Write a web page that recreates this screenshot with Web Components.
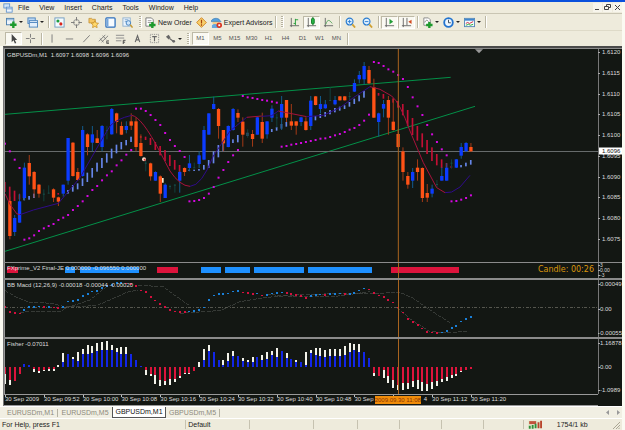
<!DOCTYPE html>
<html lang="en">
<head>
<meta charset="utf-8">
<title>GBPUSDm,M1</title>
<style>
html,body{margin:0;height:100%}
body{background:#fbfaf2;font:7px/9px "Liberation Sans",Arial,sans-serif;color:#222}
</style>
</head>
<body>
<trade-app></trade-app>
<script>
const ICONS={
app:'<rect x="1" y="1" width="7" height="5" fill="#cfe4fa" stroke="#5b8fcb"/><rect x="4" y="5" width="7" height="6" fill="#eef6ff" stroke="#5b8fcb"/><path d="M4 7h7" stroke="#5b8fcb"/>',
newchart:'<rect x=".5" y="1.500" width="8" height="7" fill="#eef4fb" stroke="#4c7fae"/><path d="M1 3h7" stroke="#7aa9d4"/><path d="M8 5v7M4.500 8.500h7" stroke="#1d9a2c" stroke-width="2.600"/>',
profiles:'<rect x="1" y="1" width="8" height="6" fill="#bcd7f3" stroke="#4b83bd"/><rect x="2.500" y="4" width="9" height="7" fill="#e3effb" stroke="#4b83bd"/><path d="M3 6h8" stroke="#4b83bd"/>',
market:'<rect x="1" y="1" width="10" height="10" fill="#f4fbff" stroke="#6f9bc0"/><circle cx="4.300" cy="4.300" r="1.700" fill="#1e9c3e"/><circle cx="7.500" cy="7.500" r="1.700" fill="#d8261c"/>',
cross4:'<circle cx="6" cy="6" r="3.200" fill="none" stroke="#888"/><path d="M6 0v4M6 8v4M0 6h4M8 6h4" stroke="#777"/>',
folder:'<path d="M1 1.500h3l1 1h3v4H1z" fill="#f5c663" stroke="#b98527" stroke-width=".7"/><path d="M7.500 4l1.300 2.500 2.700.4-2 1.900.5 2.800-2.500-1.300L5 11.600l.5-2.800-2-1.900 2.700-.4z" fill="#ffd86b" stroke="#c58a1f" stroke-width=".8"/>',
terminal:'<rect x="1" y="1" width="10" height="10" rx="1" fill="#f7fbff" stroke="#2e70bd" stroke-width="1.400"/><path d="M3 2v8" stroke="#6aa0da" stroke-width="1.500"/>',
tester:'<rect x="1" y="1" width="8" height="9" fill="#eef5fc" stroke="#8fb0cf"/><path d="M3 3h4M3 5h3" stroke="#7da6cf"/><circle cx="7" cy="6.500" r="2.500" fill="#cfe6fb" stroke="#3f7fbe"/><path d="M9 8.500l2.500 3" stroke="#c79a34" stroke-width="1.600"/>',
order:'<path d="M1 1h6l2 2v7H1z" fill="#fff" stroke="#777"/><path d="M3 4h4M3 6h4" stroke="#999"/><path d="M8 5.500V12M4.500 8.700h7" stroke="#1d9a2c" stroke-width="2.600"/>',
warn:'<path d="M6 .7L11.300 6 6 11.300.7 6z" fill="#f8cf6b" stroke="#cf8422"/><path d="M6 3v4M6 8v1.500" stroke="#a5420b" stroke-width="1.300"/>',
expert:'<circle cx="5" cy="5.500" r="3.500" fill="#f4d08b"/><path d="M0 5c1-4 8-5 10-1l1 1z" fill="#56a0dd" stroke="#2d72ae" stroke-width=".6"/><path d="M1 9c2-2 6-2 8 1v2H1z" fill="#66a8df"/><circle cx="9" cy="9" r="3" fill="#d93420"/><rect x="8" y="8" width="2" height="2" fill="#fff"/>',
bars:'<path d="M2.500 1v10M1 9.500h10" stroke="#666"/><path d="M7 2v7M7 3h3M5 7h2" stroke="#209a35"/>',
candle:'<path d="M2.500 1v10M1 9.500h10" stroke="#666"/><path d="M7.500 0v9" stroke="#147a26"/><rect x="6" y="1.500" width="3" height="6" rx="1" fill="#27b443" stroke="#147a26"/>',
line:'<path d="M2.500 1v10M1 9.500h10" stroke="#666"/><path d="M3 8c2-6 4-5 7-1" fill="none" stroke="#4aa152"/>',
zoomin:'<circle cx="5" cy="5" r="3.700" fill="#dff0ff" stroke="#2b7cd0" stroke-width="1.300"/><path d="M5 3v4M3 5h4" stroke="#2b7cd0"/><path d="M8 8l3 3.500" stroke="#cfa030" stroke-width="1.900"/>',
zoomout:'<circle cx="5" cy="5" r="3.700" fill="#dff0ff" stroke="#2b7cd0" stroke-width="1.300"/><path d="M3 5h4" stroke="#2b7cd0"/><path d="M8 8l3 3.500" stroke="#cfa030" stroke-width="1.900"/>',
scroll:'<path d="M2.500 1v10M1 9.500h10" stroke="#666"/><path d="M6 2l4 3.200L6 8z" fill="#239d37"/>',
shift:'<path d="M2.500 1v10M1 9.500h10M6.500 1v8" stroke="#666"/><path d="M11.500 3L8 5.300l3.500 2.300z" fill="#d34a1e"/>',
indic:'<path d="M2 1h5l2 2v6H2z" fill="#fff" stroke="#888"/><path d="M3 6c1-3 3-3 4-1" fill="none" stroke="#777"/><path d="M8 5.500V12M4.500 8.700h7" stroke="#1d9a2c" stroke-width="2.600"/>',
clock:'<circle cx="6" cy="6" r="4.700" fill="#eef7ff" stroke="#2374cf" stroke-width="2"/><path d="M6 3v3.300h2.500" fill="none" stroke="#345"/>',
templ:'<rect x=".5" y="1.500" width="11" height="9" fill="#f5faff" stroke="#5588b8"/><path d="M1 3h10" stroke="#3e86cf" stroke-width="2"/><path d="M2 7l2-1 2 1 4-2" fill="none" stroke="#c23"/><path d="M2 9l3-1 2 1 3-1" fill="none" stroke="#2a3"/>',
cursor:'<path d="M4 1v9l2-2 1.500 3.500 1.500-.7L7.500 7.500H10z" fill="#444"/>',
cross:'<path d="M6 1v4M6 7v4M1 6h4M7 6h4" stroke="#777"/>',
vline:'<path d="M5.500 1.500v9" stroke="#777"/>',
hline:'<path d="M2 6.500h8" stroke="#777"/>',
trend:'<path d="M2.500 10L9.500 2.500" stroke="#777"/>',
channel:'<path d="M1 9l7-7M4 10l7-7M2 6l4 4M5 3l4 4" stroke="#777" fill="none"/><path d="M12 8.500H9.500v3H12M9.500 10H12" stroke="#444" fill="none" stroke-width=".8"/>',
fib:'<path d="M1 2.500h9M1 5.500h9M1 8.500h6" stroke="#888"/><path d="M11.500 8H9v4M9 10h2" stroke="#444" fill="none"/>',
textA:'<path d="M3.500 10L6 3l2.500 7M4.500 7.500h3" stroke="#666" fill="none" stroke-width="1.200"/>',
label:'<rect x="1.500" y="1.500" width="9" height="9" fill="none" stroke="#888" stroke-dasharray="1 1"/><path d="M3.500 4h5M6 4v5" stroke="#666" stroke-width="1.200"/>',
arrows:'<path d="M1 4l3-2 2 3-2 2z" fill="#666"/><path d="M5 6l4 3" stroke="#666" stroke-width="1.300"/><circle cx="9.500" cy="9" r="1.500" fill="#666"/>',
signal:'<path d="M0 1h12v10H0z" fill="#e3e9cf"/><path d="M1 3.500h6" stroke="#c2533c" stroke-width="4"/><path d="M1.500 7.500v4M4 6.500v5M6.500 5v6" stroke="#2f8f3a" stroke-width="1.600"/><path d="M9 3v8M11.200 1v10" stroke="#b9442c" stroke-width="1.600"/>'
};
const icon=n=>`<svg viewBox="0 0 12 12" aria-hidden="true">${ICONS[n]}</svg>`;
const def=(tag,html)=>customElements.define(tag,class extends HTMLElement{
  connectedCallback(){
    if(this.shadowRoot)return;
    const t=document.createElement('template');
    t.innerHTML=typeof html==='function'?html(this):html;
    this.attachShadow({mode:'open'}).append(t.content.cloneNode(true));
  }
});

def('tool-button',el=>`<style>
:host{display:block;flex:none}
button{all:unset;box-sizing:border-box;display:flex;align-items:center;justify-content:center;gap:2px;min-width:17px;height:13px;white-space:nowrap;border:1px solid transparent;color:#222}
:host([drop]) button{min-width:21px}
:host([pressed]) button{background:#faf9f2;border-color:#bdb9a6 #fff #fff #bdb9a6}
:host([text]) button{color:#555;font-size:6px}
svg{width:11px;height:11px;flex:none;display:block}
i{border:2px solid transparent;border-top-color:#222;border-bottom:0}
</style><button type="button" aria-label="${el.getAttribute('label')}" aria-pressed="${el.hasAttribute('pressed')}">${el.hasAttribute('icon')?icon(el.getAttribute('icon')):''}<slot></slot>${el.hasAttribute('drop')?'<i></i>':''}</button>`);

def('tool-sep',`<style>:host{display:block;flex:none;width:1px;height:12px;margin:0 2px;background:#bbb7a4;box-shadow:1px 0 #fff}
:host([grip]){width:2px;margin:0 3px;background:repeating-linear-gradient(#b6b2a0 0 1px,#f7f5ea 1px 2px)}</style>`);

def('tool-row',`<style>:host{display:flex;align-items:center;box-sizing:border-box;background:#eeebdc;overflow:hidden}</style><slot></slot>`);

def('menu-bar',`<style>
:host{display:flex;align-items:center;background:#eeebdc;box-sizing:border-box;border-bottom:1px solid #c9c5b3;padding-left:3px;height:12px}
svg{width:10px;height:10px}
nav{display:flex;flex:1}
button{all:unset;padding:0 5px;color:#222}
.w{display:flex;gap:1px}
.w button{padding:0;width:9px;height:9px;background:#f7f5ec}
.w svg{width:7px;height:7px;margin:1px;display:block}
</style>${icon('app')}<nav>${['File','View','Insert','Charts','Tools','Window','Help'].map(s=>`<button type="button">${s}</button>`).join('')}</nav>
<div class="w"><button type="button" aria-label="Minimize"><svg viewBox="0 0 7 7"><path d="M1 5.500h4" stroke="#444"/></svg></button><button type="button" aria-label="Restore"><svg viewBox="0 0 7 7" fill="none" stroke="#444"><path d="M2.500 2V.5h4v3H5M.5 2.500h4v3h-4z"/></svg></button><button type="button" aria-label="Close"><svg viewBox="0 0 7 7"><path d="M1 1l5 5M6 1L1 6" stroke="#444"/></svg></button></div>`);

/* Plot data. Bar n is centred on x = 15 + 14.56 n; y values share one scale per window. */
const X=n=>15+14.56*n;
const CANDLES=`o,452,465,570,580 b,507,516,558,570 b,443,466,530,530 b,350,365,456,462 o,327,351,391,416 o,375,378,430,455 o,414,416,443,455 w,430,443,445,466 w,418,440,442,442 o,427,430,455,468 o,452,454,467,480 b,416,416,443,452 b,276,276,404,416 o,288,290,390,392 o,366,378,402,404 b,240,252,390,392 o,262,265,303,328 b,240,265,290,316 o,252,277,291,291 b,237,240,303,316 w,240,252,254,280 b,186,189,265,266 o,200,202,228,262 o,227,240,266,267 b,226,240,252,262 o,202,226,239,252 o,215,226,303,316 o,265,291,330,332 w,345,350,352,376 o,350,352,391,404 b,376,378,404,404 o,388,391,443,468 b,412,416,456,456 w,416,420,422,430 w,414,416,418,440 b,375,378,404,440 o,364,366,378,390 b,327,352,366,376 w,350,364,366,366 b,316,328,354,366 b,240,252,341,342 b,202,202,266,266 b,152,174,189,190 o,186,189,240,278 o,252,252,292,316 b,238,240,303,304 b,186,189,252,254 o,190,201,215,228 o,214,227,266,302 w,250,264,266,275 o,252,264,279,302 b,212,214,266,266 o,200,228,278,291 b,226,226,265,278 b,178,188,215,228 w,203,214,216,245 b,150,174,215,252 o,162,162,215,228 o,174,226,239,252 o,226,226,239,266 b,212,214,228,240 o,214,226,252,254 b,150,164,240,252 o,150,151,177,178 b,150,174,189,202 b,162,175,187,188 w,124,162,164,165 b,150,162,175,178 o,150,151,163,164 o,150,151,163,164 w,138,150,152,165 b,100,111,137,138 b,75,87,100,112 b,48,60,100,116 o,60,72,112,114 o,98,124,215,216 b,200,202,228,272 b,162,174,188,214 o,150,162,215,266 o,160,227,252,254 o,250,264,303,305 o,304,316,378,404 o,378,390,416,428 b,366,378,404,426 o,340,365,378,404 o,364,366,456,468 o,414,441,455,468 b,416,428,443,454 w,402,414,416,425 b,364,390,404,404 b,352,365,404,404 w,340,350,352,368 b,339,340,365,366 b,291,303,329,338 b,288,291,316,318 o,291,303,316,318`.split(' ').map(s=>s.split(','));
const RIB_R='0,408,438 1,422,465 2,434,465 3,445,460 11,441,446 28,270,276 29,272,282 30,276,297 31,288,312 32,300,328 33,312,345 34,327,360 35,342,371 36,357,385 77,141,149 78,144,158 80,157,170 81,165,185 82,174,208 83,192,240 84,216,267 85,240,284 86,262,304 87,282,324 88,304,345 89,324,358 90,340,366 91,351,364 92,360,366';
const RIB_B='4,452,463 5,450,461 6,443,456 13,432,443 14,417,437 15,412,430 16,397,420 17,380,408 18,366,395 19,350,377 20,336,366 21,322,350 22,308,337 23,296,322 24,288,310 25,282,298 26,272,288 38,371,375 39,371,375 40,369,374 41,357,371 42,342,366 43,316,352 44,297,334 45,290,316 47,280,291 48,267,289 50,260,270 55,249,258 56,243,254 57,234,248 58,228,242 63,216,228 64,210,223 65,204,216 66,198,212 67,192,205 68,186,199 69,182,194 70,178,189 71,168,182 72,158,174 73,148,166 74,135,155 94,357,364 95,350,361 96,342,356';
const SAR=[293,316,341,366,581,577,568,555,547,540,534,522,515,507,492,480,466,450,432,420,403,388,376,358,343,326,312,188,188,195,207,222,237,261,282,300,315,333,466,465,462,456,443,423,395,372,348,328,312,150,154,156,159,162,164,167,170,302,300,296,294,291,288,285,282,278,277,273,268,264,258,251,246,237,224,206,48,51,60,70,77,87,99,123,154,181,207,237,265,288,310,328,466,465,461,456,448];
const MACD=[142,157,160,161,150,141,141,140,142,142,143,145,142,125,124,121,108,102,95,93,85,78,75,70,70,71,72,78,92,96,111,122,133,142,151,155,156,157,155,153,151,143,121,107,103,103,101,95,93,98,99,103,101,107,105,101,100,98,99,103,106,108,114,109,106,104,105,103,102,101,103,102,99,92,86,89,100,107,112,120,128,143,158,177,187,195,206,216,218,219,218,214,205,198,185,177,172];
const FISHER=`342,372 360,375 362 341 313 314 327,336 333,340 330,334 327,332 328,332 320,314 307,279 282 298,291 304,277 283,268 283,256 279,259 272,248 270,246 270,244 270,255 277,263 283,261 283,260 283 300 317 330,346 342,348 345,372 360,378 362,376 358,374 356,367 347,354 340,343 338,341 333 322,305 300,267 272,255 277 300 315,300 303,280 288,274 287 303,294 305,300 307,290 291 300,285 296,276 285,273 291,264 274 293,280 297 307,300 305 315,276 280,270 284,265 287,264 290,270 287,266 287,267 287,267 284,258 275,250 270,252 275,253 275 294 340,347 347 330,353 348,370 361,384 375,390 370,391 370,388 364,382 360,387 367,392 373,392 367,386 362,378 357,366 350,363 345,355 342,347 334,337 330 326`.split(' ').map(s=>s.split(',').map(Number));
const R=(x,y,w,h,f)=>`<rect x="${x.toFixed(1)}" y="${y}" width="${w}" height="${h}" fill="${f}"/>`;
const P=(d,c,w=3,e='')=>`<path d="${d}" fill="none" stroke="${c}" stroke-width="${w}" ${e}/>`;
const cursorLine=P('M1195 0V660','#a9641f');
const ribbon=(s,c)=>s.split(' ').map(r=>{const[n,a,b]=r.split(',').map(Number);return R(X(n)-3,a,5,b-a,c)}).join('');
const PLOTS={
price:()=>{
  let s=P('M15 205L1352 94M15 616L1425 181','#039048')+P('M15 316.500H1794','#666b6b');
  s+=ribbon(RIB_R,'#c30f35')+ribbon(RIB_B,'#6686e8');
  CANDLES.forEach(([c,h,t,b,l],k)=>{
    const x=X(k+1),[wick,body]={o:['#a33a16','#ff5216'],b:['#125a8c','#0c3cff'],w:['#123f3c','#17504a']}[c];
    s+=R(x-1.5,+h,3,Math.max(3,l-h),wick)+R(x-(c=='w'?3:5),+t,c=='w'?6:10,Math.max(3,b-t),body);
  });
  s+=P('M15 443L30 475 50 503 60 506M395 208Q425 212 480 318L510 375Q540 420 570 421M740 214L785 210M835 195L920 212M1110 122L1140 130 1175 150Q1200 170 1230 255L1270 350 1310 425 1335 440','#a8123c');
  s+=P('M60 506L100 492 175 472 240 395 300 290 330 240Q350 218 395 208M570 421Q605 420 640 330L690 255 740 214M785 211L815 209 835 195M920 212L970 208 1020 185 1060 155 1110 122M1335 440L1355 438 1380 423 1410 388','#2f0b8a');
  SAR.forEach((y,n)=>s+=R(X(n)-3,y-3,6,6,'#d408e0'));
  return s+'<circle cx="432" cy="340" r="6" fill="#f6d8c8"/><circle cx="434" cy="341" r="3" fill="#d33"/><path d="M486 396h5v14h-5z" fill="#f6e8cc"/><path d="M1425 10h24l-12 12z" fill="#999"/>';
},
trend:()=>[[20,55,1],[195,226],[240,417],[472,534,1],[603,663],[675,751],[763,911],[923,1116],[1172,1378,1]].map(([a,b,r])=>R(a,21,b-a,18,r?'#dc143c':'#1e90ff')).join(''),
macd:()=>{
  let s=P('M15 142H1794','#77776c',2,'stroke-dasharray="9 5 3 5"');
  s+=P('M15 92L50 112 90 127 160 130 190 141 290 137 340 115 380 97 415 90M60 158L100 153 180 155 200 143 270 120 320 80M415 76L490 80 530 110 570 138M540 160L640 153 665 150 720 125 800 112 900 104 1050 100 1130 100 1200 97 1240 115 1290 150 1350 188M800 103L900 111 1000 110 1110 95M1190 143L1235 180 1290 215 1340 218 1400 214','#484c48',2,'stroke-dasharray="12 4"');
  MACD.forEach((y,n)=>s+=R(X(n)-3,y-3,6,5,n&&y<=MACD[n-1]?'#1a80d8':'#d4103e'));
  return s;
},
fisher:()=>FISHER.map(([c,e],n)=>{
  const up=(e??c)<321,x=X(n)-3;
  return (up?R(x,c,6,321-c,'#1226e8'):R(x,321,6,c-321,'#dc143c'))+(e?R(x,Math.min(c,e),6,Math.abs(c-e),'#f2f2ea'):'');
}).join('')
};

def('chart-window',el=>`<style>
:host{display:grid;grid-template-columns:minmax(0,1fr) 24px;min-height:0;box-sizing:border-box;border-top:var(--rule,2px) solid #8b8b8b;color:#dcdcdc;font-size:6px;line-height:7px}
.plot{position:relative;min-height:0;border-left:1px solid #999;border-right:1px solid #777;margin-right:-1px}
svg{position:absolute;inset:0;width:100%;height:100%;display:block}
.t{position:absolute;left:2px;top:var(--title,2px);white-space:nowrap}
.note{position:absolute;right:4px;top:2px;font:8px/9px "DejaVu Sans",sans-serif;color:#dc960c}
.axis{position:relative;display:flex;flex-direction:column;justify-content:space-between;padding:var(--pad,0);white-space:nowrap;font-size:var(--size,6px);line-height:var(--line,7px)}
.axis span{display:flex;align-items:center;gap:var(--gap,0)}
.axis span::before{content:"";width:2px;height:1px;background:#aaa}
.axis ::slotted(*){position:absolute;left:1px;right:0;top:48%;transform:translateY(-50%);font-weight:400;background:#fff;color:#111;padding-left:3px;line-height:7px}
</style><div class="plot"><svg viewBox="${el.getAttribute('box')}" preserveAspectRatio="none" shape-rendering="${el.id=='price'?'auto':'crispEdges'}" aria-hidden="true">${PLOTS[el.id]()}${cursorLine}</svg><div class="t">${el.getAttribute('heading')}</div>${el.hasAttribute('note')?`<div class="note">${el.getAttribute('note')}</div>`:''}</div>
<div class="axis">${el.getAttribute('scale').split(' ').map(s=>`<span>${s}</span>`).join('')}<slot></slot></div>`);

def('time-axis',`<style>
:host{display:block;position:relative;border-top:1px solid #999;border-bottom:1px solid #999;box-sizing:border-box;color:#dcdcdc;font-size:6px;line-height:9px;margin-right:24px}
ol{display:flex;list-style:none;margin:0;padding:0 0 0 1px}
li{flex:0 0 6.55%;white-space:nowrap;width:0;position:relative;box-sizing:border-box}
li.r{text-align:right;padding-right:5px}
li::before{content:"";position:absolute;left:0;top:0;width:1px;height:2px;background:#bbb}
mark{position:absolute;left:62.4%;top:1px;line-height:8px;background:#f08c0a;color:#8a3606;white-space:nowrap}
</style><ol>${['2009','09:52','10:00','10:08','10:16','10:24','10:32','10:40','10:48',''].map(t=>`<li>30 Sep ${t}</li>`).join('')}<li class="r">4</li><li>30 Sep 11:12</li><li>30 Sep 11:20</li></ol><mark>2009.09.30 11:08</mark>`);

def('chart-tabs',`<style>
:host{display:flex;align-items:center;background:#f1efe3;height:12px;padding-left:4px;box-sizing:border-box;border-top:1px solid #fff}
button{all:unset;box-sizing:border-box;width:54px;text-align:center;color:#8d8a7d;border-right:1px solid #b5b2a2;line-height:8px}
button[aria-selected=true]{background:#fff;color:#111;border:1px solid #555;border-top:0;line-height:10px}
button.n{border:0}
.s{flex:1}
svg{width:16px;height:7px;margin-right:1px}
</style><button role="tab">EURUSDm,M1</button><button role="tab" class="n">EURUSDm,M5</button><button role="tab" aria-selected="true">GBPUSDm,M1</button><button role="tab">GBPUSDm,M5</button><span class="s"></span><svg viewBox="0 0 16 7"><path d="M4 1v5L1 3.500zM12 1v5l3-2.500z" fill="#999"/></svg>`);

def('status-bar',`<style>
:host{display:grid;grid-template-columns:186fr 64fr 63fr 44fr 42fr 42fr 42fr 40fr 88fr 10fr;align-items:center;background:#eeebdc;border-top:1px solid #fff;height:12px;box-sizing:border-box}
div{padding-left:2px;border-right:1px solid #c6c2b0;height:9px;line-height:9px;white-space:nowrap;display:flex;gap:15px}
div.e{border:0;padding-left:4px}
svg{width:14px;height:9px;flex:none}
div.e:last-child{padding:0}
div.e:last-child svg{width:8px}
</style><div>For Help, press F1</div><div>Default</div><div></div><div></div><div></div><div></div><div></div><div></div><div class="e"><svg viewBox="0 0 12 12" preserveAspectRatio="none">${ICONS.signal}</svg>1754/1 kb</div><div class="e"><svg viewBox="0 0 8 9"><path d="M1 9l7-7M4 9l4-4M6.500 9L8 7.500" stroke="#aaa694"/></svg></div>`);

def('trade-app',`<style>
:host{display:flex;flex-direction:column;min-height:100vh;box-sizing:border-box;border-top:2px solid #0a50dc;padding-right:3px}
.one{height:17px;padding-left:4px;border-bottom:1px solid #dedac8}
.two{height:15px;padding-left:5px}
main{flex:1;display:grid;grid-template-rows:214fr 16fr 59fr 57fr 12px;background:#131713;margin-left:3px;border-left:1px solid #777;border-top:2px solid #4a4a4a;min-height:0}
#price{--rule:1px;--pad:0 0 19px;--title:3px;--gap:2px}
#trend{--rule:1px;--size:5px;--line:5px}
#macd,#fisher{--pad:1px 0 0}
</style>
<menu-bar></menu-bar>
<tool-row class="one"><tool-button icon="newchart" label="New chart" drop></tool-button><tool-button icon="profiles" label="Profiles" drop></tool-button><tool-sep></tool-sep><tool-button icon="market" label="Market watch"></tool-button><tool-button icon="cross4" label="Data window"></tool-button><tool-button icon="folder" label="Navigator"></tool-button><tool-button icon="terminal" label="Terminal"></tool-button><tool-button icon="tester" label="Strategy tester"></tool-button><tool-sep grip></tool-sep><tool-button icon="order" label="New Order">New Order</tool-button><tool-button icon="warn" label="MetaEditor"></tool-button><tool-button icon="expert" label="Expert Advisors">Expert Advisors</tool-button><tool-sep></tool-sep><tool-sep grip></tool-sep><tool-button icon="bars" label="Bar chart"></tool-button><tool-button icon="candle" label="Candlesticks" pressed></tool-button><tool-button icon="line" label="Line chart"></tool-button><tool-sep></tool-sep><tool-button icon="zoomin" label="Zoom in"></tool-button><tool-button icon="zoomout" label="Zoom out"></tool-button><tool-sep></tool-sep><tool-button icon="scroll" label="Auto scroll" pressed></tool-button><tool-button icon="shift" label="Chart shift" pressed></tool-button><tool-sep></tool-sep><tool-button icon="indic" label="Indicators" drop></tool-button><tool-button icon="clock" label="Periods" drop></tool-button><tool-button icon="templ" label="Templates" drop></tool-button><tool-sep></tool-sep></tool-row>
<tool-row class="two"><tool-button icon="cursor" label="Cursor" pressed></tool-button><tool-button icon="cross" label="Crosshair"></tool-button><tool-sep></tool-sep><tool-button icon="vline" label="Vertical line"></tool-button><tool-button icon="hline" label="Horizontal line"></tool-button><tool-button icon="trend" label="Trendline"></tool-button><tool-button icon="channel" label="Channel"></tool-button><tool-button icon="fib" label="Fibonacci"></tool-button><tool-button icon="textA" label="Text"></tool-button><tool-button icon="label" label="Text label"></tool-button><tool-button icon="arrows" label="Arrows" drop></tool-button><tool-sep grip></tool-sep>${['M1','M5','M15','M30','H1','H4','D1','W1','MN'].map((t,i)=>`<tool-button text label="${t}"${i?'':' pressed'}>${t}</tool-button>`).join('')}<tool-sep></tool-sep></tool-row>
<main>
<chart-window id="price" box="15 9 1779 639" heading="GBPUSDm,M1 &nbsp;1.6097 1.6098 1.6096 1.6096" scale="1.6120 1.6115 1.6110 1.6105 1.6100 1.6095 1.6090 1.6085 1.6080 1.6075"><b>1.6096</b></chart-window>
<chart-window id="trend" box="15 9 1779 45" heading="FXprime_V2 Final-JE 0.000000 -0.096550 0.000000" note="Candle: 00:26" scale="3 0.00 -3"></chart-window>
<chart-window id="macd" box="15 60 1779 171" heading="BB Macd (12,26,9) -0.00018 -0.00044 -0.00020" scale="0.00049 0.00 -0.00055"></chart-window>
<chart-window id="fisher" box="15 237 1779 165" heading="Fisher -0.07011" scale="1.16878 0.00 -1.0989"></chart-window>
<time-axis></time-axis>
</main>
<chart-tabs></chart-tabs>
<status-bar></status-bar>`);
</script>
</body>
</html>
